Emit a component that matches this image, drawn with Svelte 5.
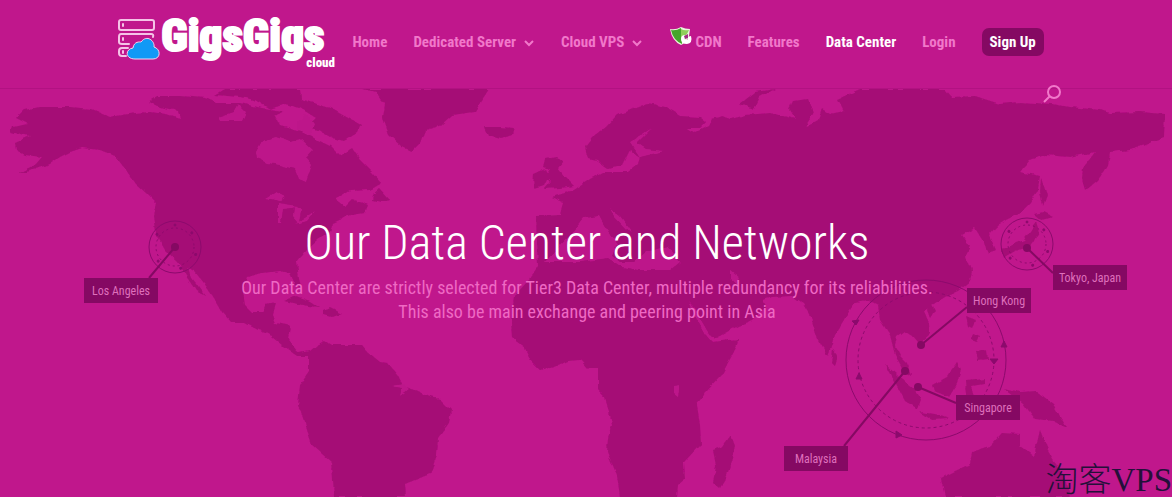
<script lang="ts">

    type NavItem = { label: string; menu?: boolean; shield?: boolean; current?: boolean };

    const nav: NavItem[] = [
        { label: 'Home' },
        { label: 'Dedicated Server', menu: true },
        { label: 'Cloud VPS', menu: true },
        { label: 'CDN', shield: true },
        { label: 'Features' },
        { label: 'Data Center', current: true },
        { label: 'Login' },
    ];

    // Map coordinates: label box, then the spot that its line points to

    const places = [
        { name: 'Los Angeles', x: 84, y: 278, w: 74, h: 25, from: [149, 278], to: [175, 247] },
        { name: 'Tokyo, Japan', x: 1053, y: 265, w: 74, h: 25, from: [1053, 273], to: [1027, 248] },
        { name: 'Hong Kong', x: 967, y: 288, w: 64, h: 25, from: [967, 307], to: [921, 345] },
        { name: 'Singapore', x: 956, y: 395, w: 64, h: 25, from: [956, 403], to: [918, 387] },
        { name: 'Malaysia', x: 784, y: 446, w: 64, h: 25, from: [844, 446], to: [905, 371] },
    ];

    const rings = [
        { x: 175, y: 247, r: 26 },
        { x: 1027, y: 244, r: 26 },
    ];

    const land = [
        // North America
        'M16 118L24 110L40 107L70 107L92 109L110 117L135 113L150 112L166 114L180 118L178 111L160 107L148 102L157 96L180 96L205 98L217 103L240 103L262 108L284 111L275 116L280 126L302 132L318 140L330 146L340 156L352 148L360 160L372 172L382 183L370 190L350 191L336 199L345 206L352 199L368 205L365 213L350 215L333 223L330 232L318 240L305 252L297 262L299 279L302 289L296 286L290 273L280 271L262 273L248 277L243 290L245 305L252 312L262 312L266 304L276 302L273 315L276 323L290 326L288 340L298 352L310 350L310 356L298 356L284 346L272 336L258 330L245 323L232 323L222 312L214 298L204 283L195 272L188 267L191 278L205 296L196 291L186 276L178 262L165 250L155 232L153 215L156 203L148 195L135 183L126 170L115 156L100 150L82 148L70 152L60 157L50 164L30 171L18 174L35 165L42 157L25 155L16 150L15 143L30 136L10 132L12 127L28 124Z',
        'M215 95L225 89L300 89L301 99L330 108L361 125L357 133L344 141L332 138L318 130L306 127L316 118L300 108L285 104L270 109L255 100L240 97Z',
        'M373 195L380 189L390 200L383 202L372 200Z',
        'M284 301L296 296L310 301L319 307L308 306Z',
        'M322 311L330 308L342 314L332 317L322 315Z',
        // Greenland, Iceland, Britain and Ireland
        'M362 89L376 92L385 104L383 118L389 135L402 147L412 151L420 143L425 130L440 126L452 115L475 112L482 100L489 89Z',
        'M484 127L500 127L514 128L512 135L500 139L488 136Z',
        'M545 159L557 157L564 161L558 168L565 177L574 186L560 188L544 189L551 181L546 175L550 169L543 167Z',
        'M534 174L545 169L549 177L545 185L533 188Z',
        // South America
        'M309 352L318 344L325 341L331 345L362 345L368 352L380 362L388 363L398 375L403 386L415 390L430 397L440 399L451 410L449 423L438 438L437 455L430 474L415 480L405 484L406 497L334 497L332 462L312 444L307 430L302 412L298 406L300 385L309 372Z',
        // Europe, Africa and Asia
        'M585 147L592 138L605 128L617 115L633 109L648 103L665 107L680 116L700 117L706 122L700 128L687 128L694 133L708 126L712 119L722 116L730 119L745 115L770 113L796 119L789 109L793 101L808 99L814 112L805 127L818 120L822 109L830 114L844 111L838 99L860 89L945 89L952 97L975 96L1000 104L1020 102L1052 104L1070 107L1100 110L1110 113L1140 112L1165 114L1164 137L1145 145L1130 150L1110 152L1108 165L1098 180L1085 191L1082 178L1083 168L1095 152L1070 157L1045 155L1030 160L1020 172L1040 176L1038 190L1030 203L1020 213L1006 220L997 226L989 235L996 250L988 253L984 243L975 228L962 235L970 246L966 256L972 270L970 282L958 291L945 297L932 305L924 311L929 323L930 334L919 344L912 336L904 331L897 336L895 346L900 356L907 363L911 376L904 371L895 355L890 335L880 320L878 305L868 300L855 302L845 318L835 335L828 356L818 340L810 315L803 303L792 296L772 297L762 300L766 308L752 320L738 326L716 338L709 336L703 324L696 318L706 335L712 342L738 339L737 346L722 374L705 392L697 405L700 425L701 444L684 462L685 479L678 485L677 497L620 497L617 475L607 452L608 438L612 424L605 397L598 390L598 369L588 369L580 360L568 361L555 367L540 370L530 360L525 348L512 338L511 322L514 296L529 280L538 266L536 216L560 215L563 202L552 197L574 190L590 179L603 172L628 172L638 164L640 157L630 150L622 166L608 169L597 161L588 159Z',
        'M740 104L755 92L775 89L760 97L754 109Z',
        // Madagascar and Sri Lanka
        'M713 450L723 446L731 435L735 446L727 476L720 488L713 482L716 466Z',
        'M833 349L838 355L835 367L831 363Z',
        // Sakhalin and Japan
        'M1041 178L1047 195L1043 206L1040 192Z',
        'M1034 214L1044 212L1054 217L1041 220Z',
        'M1036 222L1039 233L1030 247L1014 251L1003 258L1001 250L1024 240Z',
        // South-east Asia
        'M885 364L898 376L914 389L921 399L918 409L905 401L895 382Z',
        'M919 412L935 414L949 419L932 420Z',
        'M932 385L947 377L957 362L961 369L957 384L949 397L934 391Z',
        'M966 316L976 320L972 328L968 326ZM973 333L980 336L977 342L971 340ZM976 352L987 350L988 359L978 360Z',
        'M966 381L985 379L985 384L971 386L975 399L967 396Z',
        'M1004 388L1020 392L1036 391L1053 404L1067 428L1053 421L1035 419L1023 403Z',
        'M930 300L935 310L930 318L927 310Z',
        // Australia
        'M945 497L941 478L955 471L970 464L972 452L990 446L1002 433L1020 434L1020 445L1034 456L1040 430L1048 450L1056 464L1067 482L1070 497Z',
    ].join('');

    const sea = [
        // Hudson Bay
        'M256 152L262 141L276 137L290 142L301 139L313 150L306 158L312 165L306 182L299 179L295 169L280 165L268 163L257 158Z',
        // Channels between the northern islands
        'M218 117L233 112L238 104L246 112L242 121L220 121Z',
        'M298 122L306 114L314 124L310 136L298 130Z',
        // Great Lakes
        'M266 198L276 192L286 197L280 201ZM278 203L297 206L292 208L283 209L281 223L278 223ZM294 206L301 210L299 223L293 216ZM296 224L315 211L307 221Z',
        // Baltic
        'M630 142L652 128L637 143L646 149L664 151L640 157Z',
        // Mediterranean and Adriatic
        'M545 262L558 248L572 233L584 218L599 216L604 225L609 232L617 244L612 256L620 262L634 262L646 252L668 246L680 262L670 270L640 270L622 267L608 258L580 262Z',
        'M609 208L620 216L632 232L626 229L614 216Z',
        // Caspian, Red Sea and Lake Victoria
        'M730 270L740 278L738 286L730 279ZM688 302L694 308L712 339L705 334ZM674 386L680 385L678 396L674 393ZM392 386L404 384L409 389L400 396L402 388Z',
    ].join('');

</script>

<header>

    <div class="bar">

        <a class="logo" href="#home" aria-label="GigsGigs cloud">
            <svg viewBox="0 0 44 44" width="44" height="44" aria-hidden="true">
                <g fill="none" stroke="#f5c3e7" stroke-width="2" stroke-linecap="round" stroke-linejoin="round">
                    <rect x="2" y="2" width="35" height="10" rx="2" />
                    <path d="M36 19Q37 16 34 16H4Q2 16 2 19V24Q2 26 5 26H12" />
                    <path d="M11 30H5Q2 30 2 33V35Q2 38 5 38H9M6 6V8M6 20V22M6 33V35" />
                </g>
                <path d="M18 41C8 41 8 31 16 30C17 23 23 24 24 24C30 16 38 23 37 29C44 31 44 41 36 41Z" fill="#1199f6" stroke="#f7d5ef" stroke-width="1" />
            </svg>
            <span class="brand">
                <span class="name">GigsGigs</span>
                <span class="sub">cloud</span>
            </span>
        </a>

        <nav>

            {#each nav as item}

                <a href="#{item.label}" class:current={item.current}>

                    {#if item.shield}
                        <svg class="shield" viewBox="0 0 24 22" width="24" height="22" aria-hidden="true">
                            <path d="M1 3Q7 4 12 1Q16 3 21 3L20 10Q17 17 12 19Q3 15 1 3Z" fill="#eaf7dd" />
                            <path d="M2 4Q7 5 12 2L13 18Q4 14 2 4Z" fill="#44a62b" />
                            <path d="M12 3Q15 5 20 4L18 8L12 13Z" fill="#8fce5a" />
                            <path d="M12 13Q12 9 16 9L15 13Q17 15 19 13L18 11L22 10Q24 17 18 18Q12 18 12 13Z" fill="#fff" />
                            <path d="M15 10L19 8L19 12L16 13Z" fill="#a12b85" />
                        </svg>
                    {/if}

                    {item.label}

                    {#if item.menu}
                        <svg class="chevron" viewBox="0 0 10 7" width="10" height="7" aria-hidden="true">
                            <path d="M1 1L5 5L9 1" />
                        </svg>
                    {/if}

                </a>

            {/each}

            <a class="signup" href="#signup">Sign Up</a>

        </nav>

        <button class="search" type="button" aria-label="Search">
            <svg viewBox="0 0 20 20" width="20" height="20" aria-hidden="true">
                <circle cx="12" cy="8" r="6" />
                <path d="M8 12L2 18" />
            </svg>
        </button>

    </div>

</header>

<main>

    <svg class="map" viewBox="0 89 1172 408" role="img" aria-label="World map of data centers">

        <defs>
            <filter id="coast" x="0" y="0" width="100%" height="100%">
                <feTurbulence type="fractalNoise" baseFrequency="0.14" numOctaves="1" seed="4" />
                <feDisplacementMap in="SourceGraphic" scale="5" xChannelSelector="R" yChannelSelector="G" />
            </filter>
        </defs>

        <g filter="url(#coast)">
            <path class="land" d={land} />
            <path class="sea" d={sea} />
        </g>

        <g class="ring">

            {#each rings as ring}
                <circle cx={ring.x} cy={ring.y} r={ring.r} />
                <circle cx={ring.x} cy={ring.y} r={ring.r - 7} stroke-dasharray="2 3" />
                {#each [20, 75, 140, 215, 270, 320] as angle}
                    <circle class="dot" cx={ring.x + 22} cy={ring.y} r="1" transform="rotate({angle} {ring.x} {ring.y})" />
                {/each}
            {/each}

            <circle cx="926" cy="360" r="80" />
            <circle cx="926" cy="360" r="68" stroke-dasharray="3 3" />
            <path class="dot" d="M1004 341L1007 347H1001ZM994 364L990 359H998ZM859 373L862 379H856ZM896 431L902 435L896 438ZM852 321L859 320L856 325Z" />

        </g>

        {#each places as place}

            <g class="place">
                <line x1={place.from[0]} y1={place.from[1]} x2={place.to[0]} y2={place.to[1]} />
                <circle cx={place.to[0]} cy={place.to[1]} r="4" />
                <rect x={place.x} y={place.y} width={place.w} height={place.h} />
                <text x={place.x + place.w / 2} y={place.y + 17}>{place.name}</text>
            </g>

        {/each}

    </svg>

    <section>

        <h1>Our Data Center and Networks</h1>
        <p>Our Data Center are strictly selected for Tier3 Data Center, multiple redundancy for its reliabilities.<br />This also be main exchange and peering point in Asia</p>

    </section>

    <span class="watermark">淘客VPS</span>

</main>

<style>

    :global(body) {

        margin: 0;

        background: #c0178c;

        font-family: 'Roboto Condensed', 'Liberation Sans Narrow', Roboto, sans-serif;

    }

    header {

        position: relative;
        z-index: 1;

        border-bottom: 1px solid #b21282;

    }

    .bar {

        position: relative;

        display: flex;
        align-items: center;
        justify-content: space-between;

        width: 80%;
        height: 88px;
        margin: 0 auto;

    }

    a {

        color: #f178ca;
        text-decoration: none;

    }

    .logo {

        display: flex;

        color: #fff;

    }

    .brand {

        display: flex;
        align-items: flex-end;

        height: 52px;

        font-weight: 900;

    }

    .name {

        align-self: flex-start;

        font-size: 45px;
        line-height: 36px;
        -webkit-text-stroke: 2px #fff;

    }

    .sub {

        margin-left: -18px;

        font-size: 13px;
        line-height: 14px;

    }

    nav {

        display: flex;
        align-items: center;
        gap: 26px;

        padding: 0 11px 4px 0;

    }

    nav a {

        display: flex;
        align-items: center;

        font-size: 15px;
        font-weight: 700;
        line-height: 20px;
        white-space: nowrap;

    }

    nav .current {

        color: #fff;

    }

    .chevron {

        margin: 2px 1px 0 8px;

        fill: none;
        stroke: #f178ca;
        stroke-width: 2;

    }

    .shield {

        margin: -10px 2px 0 0;

    }

    nav .signup {

        padding: 4px 8px;
        border-radius: 7px;

        background: #850963;
        color: #fff;

    }

    .search {

        position: absolute;
        right: -7px;
        bottom: -16px;

        display: flex;

        padding: 0;
        border: 0;

        background: none;

    }

    .search svg {

        fill: none;
        stroke: #f178ca;
        stroke-width: 2;

    }

    main {

        position: relative;

        display: grid;

        overflow: hidden;

    }

    .map {

        grid-area: 1 / 1;

        display: block;
        width: 100%;

    }

    .land {

        fill: #a50c76;

    }

    .sea {

        fill: #bd178a;

    }

    .ring {

        fill: none;
        stroke: #8c0a6d;
        stroke-width: 1;

    }

    .ring .dot {

        fill: #8c0a6d;

    }

    .place line {

        stroke: #850963;
        stroke-width: 2;

    }

    .place circle,
    .place rect {

        fill: #850963;

    }

    .place text {

        fill: #df70bc;

        font-size: 12px;
        text-anchor: middle;

    }

    section {

        grid-area: 1 / 1;
        z-index: 1;

        padding: 123px 0 0 2px;

        text-align: center;

    }

    h1 {

        margin: 0 0 2px;

        color: #fff;

        font-size: 48px;
        font-weight: 300;
        line-height: 62px;

    }

    p {

        margin: 0;

        color: #ef69c4;

        font-size: 18px;
        line-height: 24px;

    }

    .watermark {

        position: absolute;
        right: 0;
        bottom: 0;
        z-index: 2;

        color: #24103a;

        font-family: 'Liberation Serif', 'Noto Sans CJK SC', serif;
        font-size: 33px;
        font-weight: 300;
        line-height: 34px;

    }

</style>
